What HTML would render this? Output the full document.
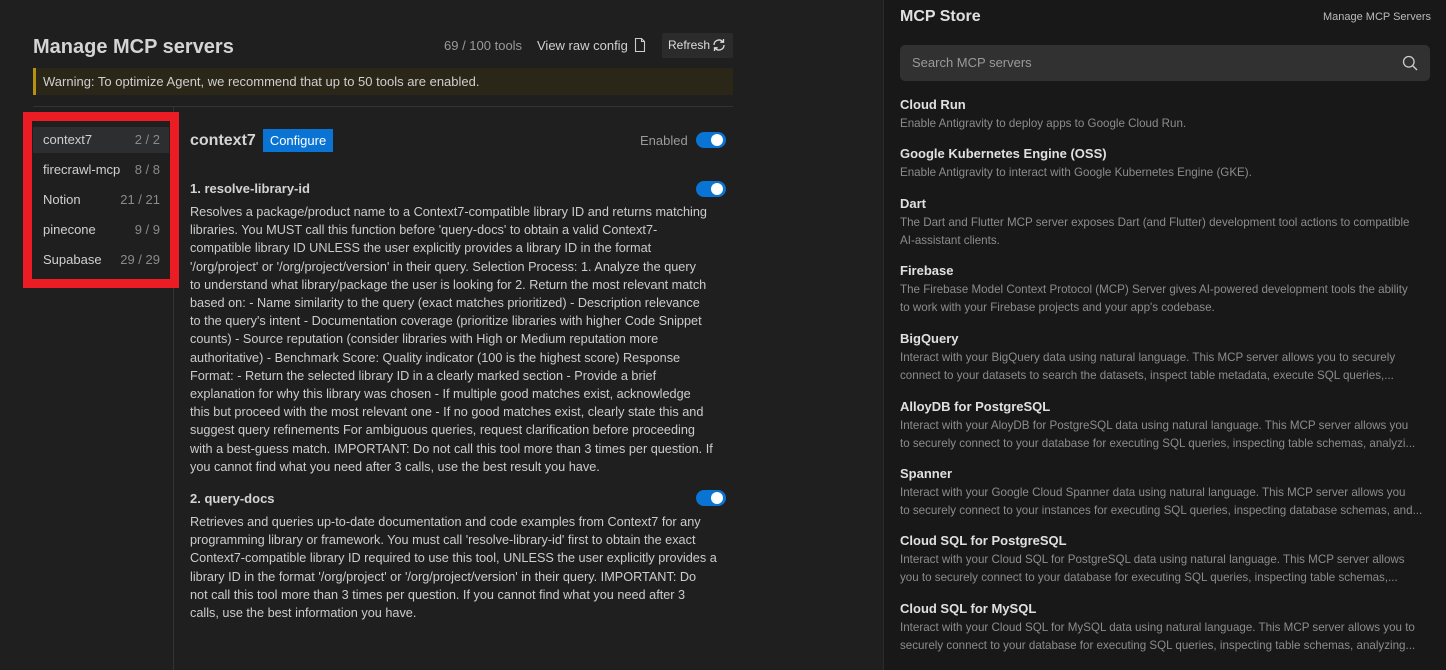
<!DOCTYPE html>
<html><head><meta charset="utf-8"><style>
*{margin:0;padding:0;box-sizing:border-box}
body{width:1446px;height:670px;overflow:hidden;background:#1f1f1f;font-family:"Liberation Sans",sans-serif;color:#ccc;position:relative}
.a{position:absolute;white-space:nowrap}
.tg{position:absolute;width:30px;height:16px;border-radius:8px;background:#0a74d4}
.tg::after{content:"";position:absolute;right:3px;top:2px;width:12px;height:12px;border-radius:50%;background:#fff}
.desc{position:absolute;left:190px;font-size:12.7px;line-height:18.2px;color:#cccccc;white-space:nowrap}
.side div{position:absolute;left:33px;width:136px;height:26px;font-size:13px;line-height:26px;color:#d0d0d0;padding-left:10px}
.side span{position:absolute;right:9px;color:#8a8a8a}
#right{position:absolute;left:883px;top:0;width:563px;height:670px;background:#181818;border-left:1px solid #2b2b2b}
.it{position:absolute;left:16px;font-size:11.6px;line-height:18px;color:#8c8c8c;white-space:nowrap}
.it b{display:block;font-size:13px;color:#e0e0e0;margin-bottom:1px}
</style></head><body>
<div class="a" style="left:33px;top:36px;font-size:20px;font-weight:bold;color:#d4d4d4">Manage MCP servers</div>
<div class="a" style="left:444px;top:38px;font-size:13px;color:#9a9a9a">69 / 100 tools</div>
<div class="a" style="left:537px;top:38px;font-size:13px;color:#d0d0d0">View raw config</div>
<svg class="a" style="left:634px;top:37px" width="12" height="16" viewBox="0 0 12 16"><path d="M1.5 1.5h6l3 3v10h-9z M7.5 1.5v3h3" fill="none" stroke="#ccc" stroke-width="1.1"/></svg>
<div class="a" style="left:662px;top:33px;width:71px;height:25px;background:#2b2b2b;border-radius:2px;font-size:12px;line-height:25px;padding-left:6px;color:#ddd">Refresh</div>
<svg class="a" style="left:711px;top:37px" width="16" height="16" viewBox="0 0 16 16"><path d="M3 8a5 5 0 0 1 9-3M13 8a5 5 0 0 1-9 3" fill="none" stroke="#ddd" stroke-width="1.3"/><path d="M12.5 2v3.2H9.3M3.5 14v-3.2h3.2" fill="none" stroke="#ddd" stroke-width="1.3"/></svg>
<div class="a" style="left:33px;top:68px;width:700px;height:27px;background:#2a2618;border-left:3px solid #b8900f;font-size:13px;line-height:27px;padding-left:7px;color:#cfcfcf">Warning: To optimize Agent, we recommend that up to 50 tools are enabled.</div>
<div class="a" style="left:33px;top:106px;width:700px;height:1px;background:#333"></div>
<div class="a" style="left:173px;top:107px;width:1px;height:563px;background:#333"></div>
<div class="side">
<div style="top:127px;background:#2c2e30">context7<span>2 / 2</span></div>
<div style="top:157px">firecrawl-mcp<span>8 / 8</span></div>
<div style="top:187px">Notion<span>21 / 21</span></div>
<div style="top:217px">pinecone<span>9 / 9</span></div>
<div style="top:247px">Supabase<span>29 / 29</span></div>
</div>
<div class="a" style="left:23px;top:112px;width:156px;height:176px;border:9px solid #ec1c24"></div>
<div class="a" style="left:190px;top:132px;font-size:16px;font-weight:bold;color:#d4d4d4">context7</div>
<div class="a" style="left:263px;top:129px;width:70px;height:23px;background:#0a74d4;color:#fff;font-size:13px;line-height:23px;text-align:center">Configure</div>
<div class="a" style="left:640px;top:133px;font-size:13px;color:#9a9a9a">Enabled</div>
<div class="tg" style="left:696px;top:132px"></div>
<div class="a" style="left:190px;top:181px;font-size:13px;font-weight:bold;color:#d4d4d4">1. resolve-library-id</div>
<div class="tg" style="left:696px;top:181px"></div>
<div class="desc" style="top:203px">Resolves a package/product name to a Context7-compatible library ID and returns matching<br>libraries. You MUST call this function before 'query-docs' to obtain a valid Context7-<br>compatible library ID UNLESS the user explicitly provides a library ID in the format<br>'/org/project' or '/org/project/version' in their query. Selection Process: 1. Analyze the query<br>to understand what library/package the user is looking for 2. Return the most relevant match<br>based on: - Name similarity to the query (exact matches prioritized) - Description relevance<br>to the query's intent - Documentation coverage (prioritize libraries with higher Code Snippet<br>counts) - Source reputation (consider libraries with High or Medium reputation more<br>authoritative) - Benchmark Score: Quality indicator (100 is the highest score) Response<br>Format: - Return the selected library ID in a clearly marked section - Provide a brief<br>explanation for why this library was chosen - If multiple good matches exist, acknowledge<br>this but proceed with the most relevant one - If no good matches exist, clearly state this and<br>suggest query refinements For ambiguous queries, request clarification before proceeding<br>with a best-guess match. IMPORTANT: Do not call this tool more than 3 times per question. If<br>you cannot find what you need after 3 calls, use the best result you have.</div>
<div class="a" style="left:190px;top:491px;font-size:13px;font-weight:bold;color:#d4d4d4">2. query-docs</div>
<div class="tg" style="left:696px;top:490px"></div>
<div class="desc" style="top:513px">Retrieves and queries up-to-date documentation and code examples from Context7 for any<br>programming library or framework. You must call 'resolve-library-id' first to obtain the exact<br>Context7-compatible library ID required to use this tool, UNLESS the user explicitly provides a<br>library ID in the format '/org/project' or '/org/project/version' in their query. IMPORTANT: Do<br>not call this tool more than 3 times per question. If you cannot find what you need after 3<br>calls, use the best information you have.</div>

<div id="right">
<div class="a" style="left:16px;top:8px;font-size:16px;font-weight:bold;color:#e0e0e0">MCP Store</div>
<div class="a" style="right:15px;top:11px;font-size:11px;color:#bbb">Manage MCP Servers</div>
<div class="a" style="left:16px;top:45px;width:530px;height:36px;background:#313131;border-radius:5px;font-size:13px;line-height:36px;padding-left:12px;color:#9a9a9a">Search MCP servers</div>
<svg class="a" style="left:518px;top:55px" width="16" height="16" viewBox="0 0 16 16"><circle cx="6.8" cy="6.8" r="5.3" fill="none" stroke="#ccc" stroke-width="1.3"/><path d="M10.7 10.7L15 15" stroke="#ccc" stroke-width="1.4"/></svg>
<div class="it" style="top:96px"><b>Cloud Run</b>Enable Antigravity to deploy apps to Google Cloud Run.</div>
<div class="it" style="top:145px"><b>Google Kubernetes Engine (OSS)</b>Enable Antigravity to interact with Google Kubernetes Engine (GKE).</div>
<div class="it" style="top:195px"><b>Dart</b>The Dart and Flutter MCP server exposes Dart (and Flutter) development tool actions to compatible<br>AI-assistant clients.</div>
<div class="it" style="top:262px"><b>Firebase</b>The Firebase Model Context Protocol (MCP) Server gives AI-powered development tools the ability<br>to work with your Firebase projects and your app's codebase.</div>
<div class="it" style="top:330px"><b>BigQuery</b>Interact with your BigQuery data using natural language. This MCP server allows you to securely<br>connect to your datasets to search the datasets, inspect table metadata, execute SQL queries,...</div>
<div class="it" style="top:398px"><b>AlloyDB for PostgreSQL</b>Interact with your AloyDB for PostgreSQL data using natural language. This MCP server allows you<br>to securely connect to your database for executing SQL queries, inspecting table schemas, analyzi...</div>
<div class="it" style="top:465px"><b>Spanner</b>Interact with your Google Cloud Spanner data using natural language. This MCP server allows you<br>to securely connect to your instances for executing SQL queries, inspecting database schemas, and...</div>
<div class="it" style="top:532px"><b>Cloud SQL for PostgreSQL</b>Interact with your Cloud SQL for PostgreSQL data using natural language. This MCP server allows<br>you to securely connect to your database for executing SQL queries, inspecting table schemas,...</div>
<div class="it" style="top:600px"><b>Cloud SQL for MySQL</b>Interact with your Cloud SQL for MySQL data using natural language. This MCP server allows you to<br>securely connect to your database for executing SQL queries, inspecting table schemas, analyzing...</div>
</div>
</body></html>
